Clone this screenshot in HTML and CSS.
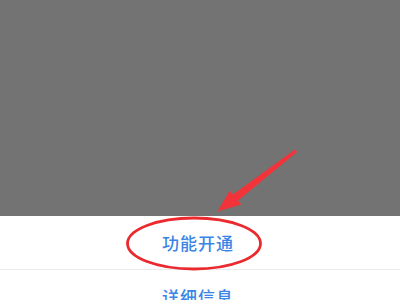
FILE: index.html
```html
<!DOCTYPE html>
<html>
<head>
<meta charset="utf-8">
<link rel="stylesheet" href="styles.css">
</head>
<body>
<div class="screen">
  <div class="mask"></div>
  <div class="sheet">
    <div class="item">功能开通</div>
    <div class="item">详细信息</div>
  </div>
  <svg class="annot" width="400" height="300" viewBox="0 0 400 300">
    <ellipse cx="194" cy="243.5" rx="66.5" ry="25.5" fill="none" stroke="#ea2a2e" stroke-width="2.8"/>
    <polygon points="297,152 295,149.4 233,194.4 229.8,190.4 217.5,211.5 241.4,204.6 238,200.6" fill="#f2343a"/>
  </svg>
</div>
</body>
</html>
```
FILE: styles.css
```css
html, body {
  margin: 0;
  padding: 0;
}
body {
  width: 400px;
  height: 300px;
  overflow: hidden;
  background: #737373;
  font-family: "Noto Sans CJK SC", "Noto Sans", sans-serif;
}
.screen {
  position: relative;
  width: 400px;
  height: 300px;
  overflow: hidden;
  display: flex;
  flex-direction: column;
}
.mask {
  height: 216px;
  flex: none;
  background: #737373;
}
.sheet {
  flex: 1;
  background: #ffffff;
  display: flex;
  flex-direction: column;
}
.item {
  height: 53px;
  flex: none;
  display: flex;
  align-items: center;
  justify-content: center;
  padding-right: 4px;
  color: #3a84e6;
  font-size: 17px;
  font-weight: 500;
  letter-spacing: 1px;
  border-bottom: 1.5px solid #ebebeb;
}
.annot {
  position: absolute;
  left: 0;
  top: 0;
  pointer-events: none;
}
```
